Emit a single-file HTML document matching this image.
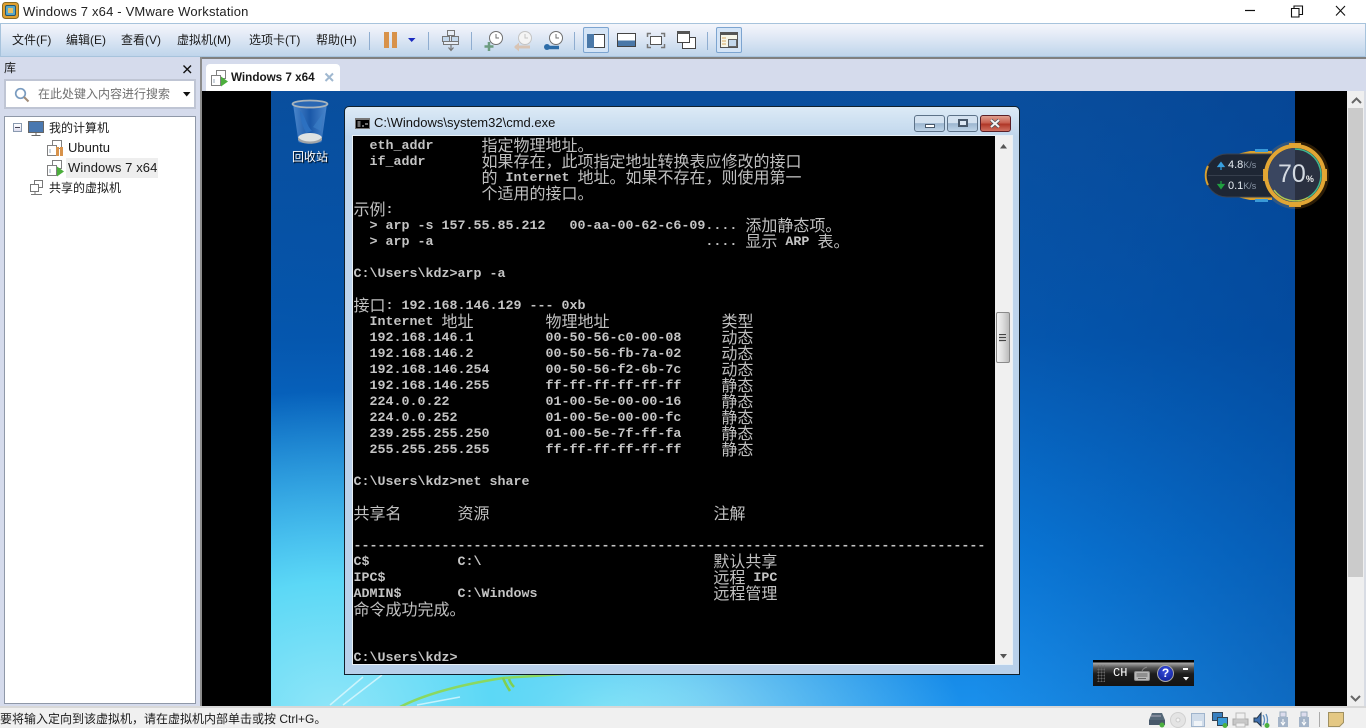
<!DOCTYPE html>
<html lang="zh"><head><meta charset="utf-8"><title>Windows 7 x64 - VMware Workstation</title>
<style>
html,body{margin:0;padding:0;width:1366px;height:728px;overflow:hidden;background:#f0f0f0}
body{font:12px "Liberation Sans","Noto Sans CJK SC",sans-serif;color:#1a1a1a;position:relative}
.a{position:absolute}
.t{position:absolute;white-space:pre;line-height:16px}
.sep{position:absolute;top:32px;width:1px;height:18px;background:#8fadd0}
#cmd .l{position:absolute;left:353.5px;margin-top:2px;white-space:pre;font:bold 13.33px/16px "Liberation Mono",monospace;color:#c4c4c4;height:16px}
#cmd b{display:inline-block;vertical-align:top;height:16px;position:relative;top:-3px;font:normal 16px/16px "WenQuanYi Zen Hei","Noto Sans CJK SC",sans-serif;color:#c0c0c0}
svg{position:absolute;overflow:visible}
</style></head><body>

<!-- title bar -->
<div class="a" style="left:0;top:0;width:1366px;height:23px;background:#fff"></div>
<svg style="left:2px;top:2px" width="18" height="18" viewBox="0 0 18 18"><rect x=".5" y=".5" width="16" height="16" rx="3" fill="#e0a030" stroke="#8a6a20"/><rect x="3.5" y="3.5" width="10" height="10" rx="1.5" fill="#5aa8c8" stroke="#24566e"/><rect x="6" y="6" width="5" height="5" fill="#e8c060"/></svg>
<div class="t" style="left:23px;top:4px;font-size:13px;letter-spacing:.18px;color:#222">Windows 7 x64 - VMware Workstation</div>
<svg style="left:1245px;top:5px" width="115" height="16" viewBox="0 0 115 16" fill="none" stroke="#111"><path d="M0 5.5H10" stroke-width="1.2"/><path d="M46.500 3.500h7.500v8.500h-7.500zM49 3.500V1h8.500v8.500H54" stroke-width="1.1"/><path d="M91 1l9 9.500M100 1l-9 9.500" stroke-width="1.1"/></svg>

<!-- toolbar -->
<div class="a" style="left:0;top:23px;width:1366px;height:34px;box-sizing:border-box;background:linear-gradient(#f4f6fb,#e6ecf7 30%,#bfd5eb);border:1px solid #a7c3dc"></div>
<div class="t" style="left:12px;top:32px">文件(F)</div>
<div class="t" style="left:66px;top:32px">编辑(E)</div>
<div class="t" style="left:121px;top:32px">查看(V)</div>
<div class="t" style="left:177px;top:32px">虚拟机(M)</div>
<div class="t" style="left:249px;top:32px">选项卡(T)</div>
<div class="t" style="left:316px;top:32px">帮助(H)</div>
<div class="sep" style="left:369px"></div><div class="sep" style="left:428px"></div><div class="sep" style="left:471px"></div><div class="sep" style="left:574px"></div><div class="sep" style="left:707px"></div>
<div class="a" style="left:384px;top:32px;width:5px;height:16px;background:#d8924a"></div>
<div class="a" style="left:392px;top:32px;width:5px;height:16px;background:#d8924a"></div>
<svg style="left:408px;top:38px" width="8" height="5"><path d="M0 0h7.500L3.700 4z" fill="#1a2ac0"/></svg>
<!-- send keys -->
<svg style="left:441px;top:30px" width="20" height="22" viewBox="0 0 20 22" fill="#e8eef6" stroke="#777"><rect x="6.500" y=".5" width="7" height="5"/><rect x="1.500" y="6.500" width="7" height="5" fill="#c4d8ec"/><rect x="10.500" y="6.500" width="7" height="5" fill="#c4d8ec"/><path d="M2.500 11.500h15v3h-15z"/><path d="M10 14v6M7.500 17.500L10 20.500l2.500-3" fill="none" stroke-width="1.200"/></svg>
<!-- snapshots -->
<svg style="left:484px;top:30px" width="20" height="22" viewBox="0 0 20 22" fill="#fff" stroke="#707070"><circle cx="12" cy="8" r="6.500"/><path d="M12 4v4h3" fill="none"/><path d="M5 12v9M.5 16.500h9" stroke="#6c9c80" stroke-width="2.500"/></svg>
<svg style="left:514px;top:30px" width="20" height="22" viewBox="0 0 20 22" fill="#f4f4f4" stroke="#c4c4c4"><circle cx="11" cy="8" r="6.500"/><path d="M11 4v4h3" fill="none"/><path d="M1 17h15" stroke="#d8c4b4" stroke-width="3"/><path d="M5 12.500l-5 4.500 5 4.500z" fill="#d8c4b4" stroke="none"/></svg>
<svg style="left:544px;top:30px" width="20" height="22" viewBox="0 0 20 22" fill="#fff" stroke="#707070"><circle cx="12" cy="8" r="6.500"/><path d="M12 4v4h3" fill="none"/><path d="M1 17.500h14" stroke="#2c6ca8" stroke-width="3.500"/><circle cx="3" cy="17" r="3" fill="#2c6ca8" stroke="none"/></svg>
<!-- view buttons -->
<div class="a" style="left:583px;top:27px;width:26px;height:26px;box-sizing:border-box;background:#d4e4f6;border:1px solid #7ca4d0;border-radius:2px"></div>
<div class="a" style="left:587px;top:34px;width:18px;height:14px;background:#fff;border:1px solid #444;box-sizing:border-box"></div>
<div class="a" style="left:587px;top:34px;width:7px;height:14px;background:#4a78a8"></div>
<div class="a" style="left:617px;top:33px;width:19px;height:14px;box-sizing:border-box;background:linear-gradient(#fff 55%,#4a78a8 55%);border:1px solid #444"></div>
<svg style="left:647px;top:33px" width="18" height="15" viewBox="0 0 18 15" fill="none" stroke="#777"><rect x="3.500" y="3.500" width="11" height="8" fill="#fff" stroke="#555"/><path d="M.5 4V.5H4M14 .5h3.500V4M.5 11v3.500H4M14 14.500h3.500V11" stroke-width="1.500"/></svg>
<svg style="left:677px;top:31px" width="19" height="18" viewBox="0 0 19 18"><rect x="5.500" y="6.500" width="13" height="11" fill="#fff" stroke="#444"/><rect x=".5" y=".5" width="12" height="11" fill="#fff" stroke="#444"/><rect x="0" y="0" width="13" height="3" fill="#555"/></svg>
<div class="a" style="left:716px;top:27px;width:26px;height:26px;box-sizing:border-box;background:#d4e4f6;border:1px solid #7ca4d0;border-radius:2px"></div>
<svg style="left:720px;top:32px" width="18" height="16" viewBox="0 0 18 16"><rect x=".5" y=".5" width="17" height="15" fill="#f6f6ea" stroke="#555"/><rect width="18" height="3" fill="#555"/><rect x="8.500" y="7.500" width="8" height="7" fill="#c4d8ec" stroke="#666"/><path d="M2 6h4M2 9h4M2 12h4" stroke="#d8a860"/></svg>

<!-- left panel -->
<div class="a" style="left:0;top:57px;width:1366px;height:650px;background:#d5dbec"></div>
<div class="a" style="left:201px;top:57px;width:1165px;height:2px;background:#808080"></div>
<div class="a" style="left:200px;top:57px;width:2px;height:650px;background:#8c8c8c"></div>
<div class="t" style="left:4px;top:60px;font-size:12px">库</div>
<svg style="left:183px;top:65px" width="9" height="9"><path d="M.5.5l7.500 7.500M8 .5L.5 8" stroke="#111" stroke-width="1.400"/></svg>
<div class="a" style="left:4px;top:79px;width:192px;height:30px;box-sizing:border-box;background:#fff;border:2px solid #bfc5d4"></div>
<svg style="left:14px;top:87px" width="16" height="16" viewBox="0 0 16 16" fill="none"><circle cx="6.500" cy="6.500" r="4.800" stroke="#7a9cc0" stroke-width="1.700"/><path d="M10 10l4.500 4.500" stroke="#a08c78" stroke-width="2"/></svg>
<div class="t" style="left:38px;top:86px;color:#707070">在此处键入内容进行搜索</div>
<svg style="left:183px;top:92px" width="8" height="5"><path d="M0 0h7.500L3.700 4.500z" fill="#111"/></svg>
<div class="a" style="left:4px;top:116px;width:192px;height:588px;box-sizing:border-box;background:#fff;border:1px solid #8f98a8"></div>
<div class="a" style="left:13px;top:123px;width:9px;height:9px;box-sizing:border-box;border:1px solid #8a9ab0;background:linear-gradient(#fff,#dde)"></div>
<div class="a" style="left:15px;top:127px;width:5px;height:1px;background:#445"></div>
<svg style="left:28px;top:121px" width="18" height="16" viewBox="0 0 18 16"><rect x=".5" y=".5" width="15" height="11" fill="#4a78b0" stroke="#666"/><path d="M8 12v2M3.500 14.500h9" stroke="#666"/></svg>
<div class="t" style="left:49px;top:120px">我的计算机</div>
<svg style="left:47px;top:140px" width="18" height="17" viewBox="0 0 18 17" fill="#fff" stroke="#808080"><rect x="5.500" y=".5" width="9" height="8"/><rect x=".5" y="5.500" width="9" height="10"/><path d="M3 9v4" stroke="#9ab"/><rect x="9" y="7" width="3" height="9" fill="#d8924a" stroke="none"/><rect x="13" y="7" width="3" height="9" fill="#d8924a" stroke="none"/></svg>
<div class="t" style="left:68px;top:140px;font-size:13px">Ubuntu</div>
<div class="a" style="left:66px;top:158px;width:92px;height:20px;background:#eeeeee"></div>
<svg style="left:47px;top:160px" width="18" height="17" viewBox="0 0 18 17" fill="#fff" stroke="#808080"><rect x="5.500" y=".5" width="9" height="8"/><rect x=".5" y="5.500" width="9" height="10"/><path d="M3 9v4" stroke="#9ab"/><path d="M10 6.500l7 5-7 5z" fill="#4cae3c" stroke="none"/></svg>
<div class="t" style="left:68px;top:160px;font-size:13px;letter-spacing:.1px">Windows 7 x64</div>
<svg style="left:30px;top:180px" width="16" height="16" viewBox="0 0 16 16" fill="#fff" stroke="#777"><rect x="4.500" y=".5" width="8" height="7"/><rect x=".5" y="4.500" width="8" height="7"/><path d="M5 11.500v3M1 14.500h11"/></svg>
<div class="t" style="left:49px;top:180px">共享的虚拟机</div>

<!-- tab -->
<div class="a" style="left:206px;top:64px;width:134px;height:27px;background:#fff;border-radius:4px 4px 0 0"></div>
<svg style="left:211px;top:70px" width="18" height="17" viewBox="0 0 18 17" fill="#fff" stroke="#808080"><rect x="5.500" y=".5" width="9" height="8"/><rect x=".5" y="5.500" width="9" height="10"/><path d="M3 9v4" stroke="#9ab"/><path d="M10 6.500l7 5-7 5z" fill="#4cae3c" stroke="none"/></svg>
<div class="t" style="left:231px;top:70px;font-size:11.7px;font-weight:bold">Windows 7 x64</div>
<svg style="left:325px;top:73px" width="9" height="9"><path d="M.5.5l7.500 7.500M8 .5L.5 8" stroke="#a0b8d0" stroke-width="2"/></svg>

<!-- vm area -->
<div class="a" style="left:202px;top:91px;width:1145px;height:616px;background:#000"></div>
<div class="a" style="left:271px;top:91px;width:1024px;height:616px;overflow:hidden;background:
radial-gradient(ellipse 400px 320px at 60px 620px,#8fe6f8 0%,#5cd8f6 40%,rgba(60,190,240,0) 100%),
radial-gradient(ellipse 360px 150px at 330px 620px,#a4ecf8 0%,rgba(100,210,245,0) 100%),
radial-gradient(ellipse 600px 200px at 300px 130px,rgba(0,70,150,.3),rgba(0,70,150,0)),
linear-gradient(180deg,#0a4f9e 0%,#0558b0 40%,#0a78d8 75%,#1a90ec 100%)">
<div class="a" style="right:0;top:0;width:320px;height:616px;background:linear-gradient(90deg,rgba(0,60,130,0),rgba(0,60,140,.45))"></div>
<svg style="left:0;top:0" width="1024" height="616" viewBox="0 0 1024 616" fill="none"><path d="M59 614L92 586M72 614L111 584M146 614L189 606" stroke="#e4fafd" stroke-width="1.500" opacity=".75"/><path d="M129 616C160 600 200 592 232 587L340 580" stroke="#8ad860" stroke-width="2.500"/><path d="M232 587c2 5 5 10 7 13M238 588c1 3 3 6 5 8" stroke="#80d050" stroke-width="2.500"/></svg>
</div>
<div class="a" style="left:1347px;top:91px;width:17px;height:616px;background:#efefef"></div>
<div class="a" style="left:1364px;top:91px;width:2px;height:616px;background:#d8dce4"></div>
<div class="a" style="left:1348px;top:108px;width:15px;height:469px;background:#cbcbcb"></div>
<svg style="left:1351px;top:97px" width="11" height="7"><path d="M1 6l4.500-4.500L10 6" fill="none" stroke="#666" stroke-width="2"/></svg>
<svg style="left:1350px;top:695px" width="11" height="7"><path d="M1 1l4.500 4.500L10 1" fill="none" stroke="#666" stroke-width="2"/></svg>

<!-- recycle bin -->
<svg style="left:291px;top:99px" width="38" height="48" viewBox="0 0 38 48">
<defs><linearGradient id="rb" x1="0" x2="1" y1="0" y2="0"><stop offset="0" stop-color="#4a86cc"/><stop offset=".5" stop-color="#1a58a8"/><stop offset="1" stop-color="#4a86cc"/></linearGradient></defs>
<path d="M2 5l5.500 38c4 2 19 2 23 0L36 5z" fill="url(#rb)"/><path d="M9 12c5 3 6 14 12 20l-6 2c-3-6-6-14-6-22z" fill="#2c70c0"/><path d="M22 28l10-14-2 18z" fill="#3c80c8" opacity=".6"/><ellipse cx="19" cy="39" rx="12" ry="5" fill="#dfe3e3"/><path d="M7 38c4 6 20 6 24 0v3c-4 5-20 5-24 0z" fill="#a0a4a8"/><ellipse cx="19" cy="5" rx="17.500" ry="3.500" fill="#2a68b4" stroke="#a8b4bc" stroke-width="1.800"/></svg>
<div class="t" style="left:292px;top:149px;color:#fff;text-shadow:1px 1px 1px #000">回收站</div>

<!-- cmd window -->
<div class="a" style="left:344px;top:106px;width:676px;height:569px;box-sizing:border-box;border:1px solid #10202c;border-radius:5px 5px 0 0;background:linear-gradient(180deg,#dceaf6 0,#c0d6ec 30px,#b8d0ea 100%)"></div>
<svg style="left:355px;top:118px" width="15" height="11" viewBox="0 0 15 11"><rect width="15" height="11" fill="#777"/><rect x="1" y="2" width="13" height="8" fill="#000"/><path d="M2.500 4h3M2.500 6h3M2.500 8h3M7 8h2M10 6h3" stroke="#ddd"/></svg>
<div class="t" style="left:374px;top:115px;font-size:13px;color:#111">C:\Windows\system32\cmd.exe</div>
<div class="a" style="left:914px;top:115px;width:31px;height:17px;box-sizing:border-box;border:1px solid #5d7288;border-radius:3px;background:linear-gradient(#d4e2f0 45%,#9cb6d0 50%,#bed4e8)"></div>
<div class="a" style="left:925px;top:124px;width:8px;height:2px;background:#fff;border:1px solid #48586a"></div>
<div class="a" style="left:947px;top:115px;width:31px;height:17px;box-sizing:border-box;border:1px solid #5d7288;border-radius:3px;background:linear-gradient(#d4e2f0 45%,#9cb6d0 50%,#bed4e8)"></div>
<div class="a" style="left:958px;top:119px;width:10px;height:8px;box-sizing:border-box;border:2px solid #48586a;background:#dde8f4"></div>
<div class="a" style="left:980px;top:115px;width:31px;height:17px;box-sizing:border-box;border:1px solid #5a2028;border-radius:3px;background:linear-gradient(#e0a090 0,#c86050 45%,#b03828 55%,#d07060)"></div>
<svg style="left:990px;top:119px" width="11" height="9"><path d="M1 1l8 7M9 1L1 8" stroke="#46505a" stroke-width="3.400"/><path d="M1 1l8 7M9 1L1 8" stroke="#f4f4f4" stroke-width="2"/></svg>
<div class="a" style="left:352px;top:135px;width:661px;height:530px;background:#f0f0f0;border:1px solid #e8f0f6;box-sizing:border-box"></div>
<div class="a" style="left:353px;top:136px;width:642px;height:528px;background:#000"></div>
<div class="a" style="left:995px;top:136px;width:17px;height:528px;background:#f0f0f0"></div>
<svg style="left:1000px;top:144px" width="8" height="5"><path d="M0 4.500L3.500 0 7 4.500z" fill="#555"/></svg>
<svg style="left:1000px;top:654px" width="8" height="5"><path d="M0 0l3.500 4.500L7 0z" fill="#555"/></svg>
<div class="a" style="left:996px;top:312px;width:14px;height:51px;box-sizing:border-box;border:1px solid #8a8a8a;border-radius:2px;background:linear-gradient(90deg,#f2f2f2,#dcdcdc 50%,#bcbcbc)"></div>
<div class="a" style="left:999px;top:334px;width:7px;height:8px;background:repeating-linear-gradient(#444 0 1px,#ccc 1px 3px)"></div>

<div id="cmd">
<div class="l" style="top:137px">  eth_addr      <b>指定物理地址。</b></div>
<div class="l" style="top:153px">  if_addr       <b>如果存在，此项指定地址转换表应修改的接口</b></div>
<div class="l" style="top:169px">                <b>的</b> Internet <b>地址。如果不存在，则使用第一</b></div>
<div class="l" style="top:185px">                <b>个适用的接口。</b></div>
<div class="l" style="top:201px"><b>示例</b>:</div>
<div class="l" style="top:217px">  &gt; arp -s 157.55.85.212   00-aa-00-62-c6-09.... <b>添加静态项。</b></div>
<div class="l" style="top:233px">  &gt; arp -a                                  .... <b>显示</b> ARP <b>表。</b></div>
<div class="l" style="top:265px">C:\Users\kdz&gt;arp -a</div>
<div class="l" style="top:297px"><b>接口</b>: 192.168.146.129 --- 0xb</div>
<div class="l" style="top:313px">  Internet <b>地址</b>         <b>物理地址</b>              <b>类型</b></div>
<div class="l" style="top:329px">  192.168.146.1         00-50-56-c0-00-08     <b>动态</b></div>
<div class="l" style="top:345px">  192.168.146.2         00-50-56-fb-7a-02     <b>动态</b></div>
<div class="l" style="top:361px">  192.168.146.254       00-50-56-f2-6b-7c     <b>动态</b></div>
<div class="l" style="top:377px">  192.168.146.255       ff-ff-ff-ff-ff-ff     <b>静态</b></div>
<div class="l" style="top:393px">  224.0.0.22            01-00-5e-00-00-16     <b>静态</b></div>
<div class="l" style="top:409px">  224.0.0.252           01-00-5e-00-00-fc     <b>静态</b></div>
<div class="l" style="top:425px">  239.255.255.250       01-00-5e-7f-ff-fa     <b>静态</b></div>
<div class="l" style="top:441px">  255.255.255.255       ff-ff-ff-ff-ff-ff     <b>静态</b></div>
<div class="l" style="top:473px">C:\Users\kdz&gt;net share</div>
<div class="l" style="top:505px"><b>共享名</b>       <b>资源</b>                            <b>注解</b></div>
<div class="l" style="top:537px">-------------------------------------------------------------------------------</div>
<div class="l" style="top:553px">C$           C:\                             <b>默认共享</b></div>
<div class="l" style="top:569px">IPC$                                         <b>远程</b> IPC</div>
<div class="l" style="top:585px">ADMIN$       C:\Windows                      <b>远程管理</b></div>
<div class="l" style="top:601px"><b>命令成功完成。</b></div>
<div class="l" style="top:649px">C:\Users\kdz&gt;</div>
</div>

<!-- speed widget -->
<svg style="left:1200px;top:138px" width="132" height="74" viewBox="0 0 132 74">
<circle cx="95" cy="37" r="34" fill="#e09020" opacity=".2"/>
<path d="M37 16L50 13H72V20H45zM37 59L50 62H72V55H45z" fill="#d8a030"/>
<path d="M55 11h13v3H55zM55 61h13v3H55z" fill="#3a9ad8"/>
<path d="M27 16H75V59H27A21.500 21.500 0 0 1 27 16z" fill="#1e2634" stroke="#3a4250"/>
<path d="M8 28c-3 6-3 13 0 19" fill="none" stroke="#d8a030" stroke-width="2"/>
<path d="M8 37.500H70" stroke="#363e4c"/>
<path d="M21 32v-6M18 28.500l3-4 3 4z" fill="#38a0e0" stroke="#38a0e0" stroke-width="1.200"/>
<path d="M21 43v6M18 46.500l3 4 3-4z" fill="#20a040" stroke="#20a040" stroke-width="1.200"/>
<path d="M63 31h3v12h-3zM124 31h3v12h-3zM89 5h12v2H89zM89 67h12v2H89z" fill="#e0a030"/>
<circle cx="95" cy="37" r="29" fill="#2a3040" stroke="#e2a634" stroke-width="4"/>
<path d="M95 10A27 27 0 0 0 95 64z" fill="#3a4660"/>
<path d="M95 11A26 26 0 0 1 108 59.500" fill="none" stroke="#40b890" stroke-width="1.500"/>
<path d="M108 59.500A26 26 0 0 1 74 52" fill="none" stroke="#b0c850" stroke-width="1.500"/>
</svg>
<div class="t" style="left:1228px;top:157px;font-size:11px;color:#e8eef4">4.8<span style="font-size:9px;color:#8c98a8">K/s</span></div>
<div class="t" style="left:1228px;top:178px;font-size:11px;color:#e8eef4">0.1<span style="font-size:9px;color:#8c98a8">K/s</span></div>
<div class="t" style="left:1278px;top:164px;font-size:25px;line-height:20px;color:#d4dae2">70<span style="font-size:9px;font-weight:bold;color:#eee">%</span></div>

<!-- IME bar -->
<div class="a" style="left:1093px;top:660px;width:101px;height:26px;background:linear-gradient(#000 0,#000 2px,#a8a8a8 3px,#505050 8px,#1c1c1c 14px,#141414)"></div>
<div class="a" style="left:1097px;top:665px;width:8px;height:17px;background:radial-gradient(#666 40%,transparent 50%) 0 0/3px 3px"></div>
<div class="t" style="left:1113px;top:665px;font:12px/16px 'Liberation Mono',monospace;color:#fff">CH</div>
<svg style="left:1134px;top:666px" width="17" height="15" viewBox="0 0 17 15"><rect x=".5" y="5.500" width="15" height="9" rx="1.500" fill="#b8b8b8" stroke="#888"/><path d="M2.500 8h11M2.500 10h11M4 12.500h8" stroke="#666"/><path d="M8 5c1-3 3-3 5-4" stroke="#888" fill="none"/></svg>
<div class="a" style="left:1157px;top:665px;width:15px;height:15px;border-radius:50%;background:radial-gradient(circle at 50% 30%,#3a50e0,#0a1a90);border:1px solid #aaa;color:#fff;font:bold 12px/15px 'Liberation Sans';text-align:center">?</div>
<div class="a" style="left:1183px;top:668px;width:5px;height:2px;background:#fff"></div>
<svg style="left:1183px;top:677px" width="6" height="4"><path d="M0 0h6L3 3.500z" fill="#fff"/></svg>

<!-- status bar -->
<div class="a" style="left:0;top:706px;width:1366px;height:2px;background:#d8d8d8"></div>
<div class="a" style="left:0;top:708px;width:1366px;height:20px;background:#f0f0f0"></div>
<div class="t" style="left:0;top:711px">要将输入定向到该虚拟机，请在虚拟机内部单击或按 Ctrl+G。</div>
<svg style="left:1149px;top:711px" width="216" height="17" viewBox="0 0 216 17">
<path d="M0 9L3 2h10l3 7v5H0z" fill="#556878"/><rect x="0" y="9" width="16" height="5" fill="#48586a"/><path d="M2 5h10" stroke="#aab"/><circle cx="13" cy="14" r="2.500" fill="#4cb040"/>
<circle cx="29" cy="9" r="7.500" fill="#e4e4e4" stroke="#d0d0d0"/><circle cx="29" cy="9" r="2" fill="#f4f4f4" stroke="#ccc"/>
<rect x="42.500" y="2.500" width="13" height="13" fill="#d0dcea" stroke="#a0b4cc"/><rect x="45" y="10" width="8" height="5" fill="#f0f4f8"/>
<rect x="63.500" y="1.500" width="10" height="8" fill="#3a80c0" stroke="#345"/><rect x="68.500" y="6.500" width="10" height="8" fill="#3a9ad8" stroke="#345"/><circle cx="76" cy="14.500" r="2.500" fill="#4cb040"/>
<rect x="84" y="8" width="15" height="6" fill="#c8c8c8" stroke="#aaa"/><rect x="87" y="2" width="9" height="6" fill="#f0f0f0" stroke="#bbb"/><rect x="87" y="12" width="9" height="4" fill="#f0f0f0" stroke="#bbb"/>
<path d="M105 7h3l4-5v13l-4-4h-3z" fill="#4070b0" stroke="#234"/><path d="M114 4c2 3 2 7 0 10M117 3c2 4 2 8 0 12" stroke="#6090c0" fill="none" stroke-width="1.300"/><circle cx="118" cy="14.500" r="2.500" fill="#4cb040"/>
<rect x="131" y="1" width="6" height="5" fill="#dde" stroke="#9ab"/><rect x="129" y="6" width="10" height="10" fill="#a4b4c8"/><path d="M134 8v6M132 11l2 3 2-3" stroke="#fff" fill="none"/>
<rect x="152" y="1" width="6" height="5" fill="#dde" stroke="#9ab"/><rect x="150" y="6" width="10" height="10" fill="#a4b4c8"/><path d="M155 8v6M153 11l2 3 2-3" stroke="#fff" fill="none"/>
<path d="M170.500 1v15" stroke="#aaa"/>
<path d="M179.500 1.500h15v10l-4 4h-11z" fill="#e4c884" stroke="#a09060"/>
</svg>
</body></html>
